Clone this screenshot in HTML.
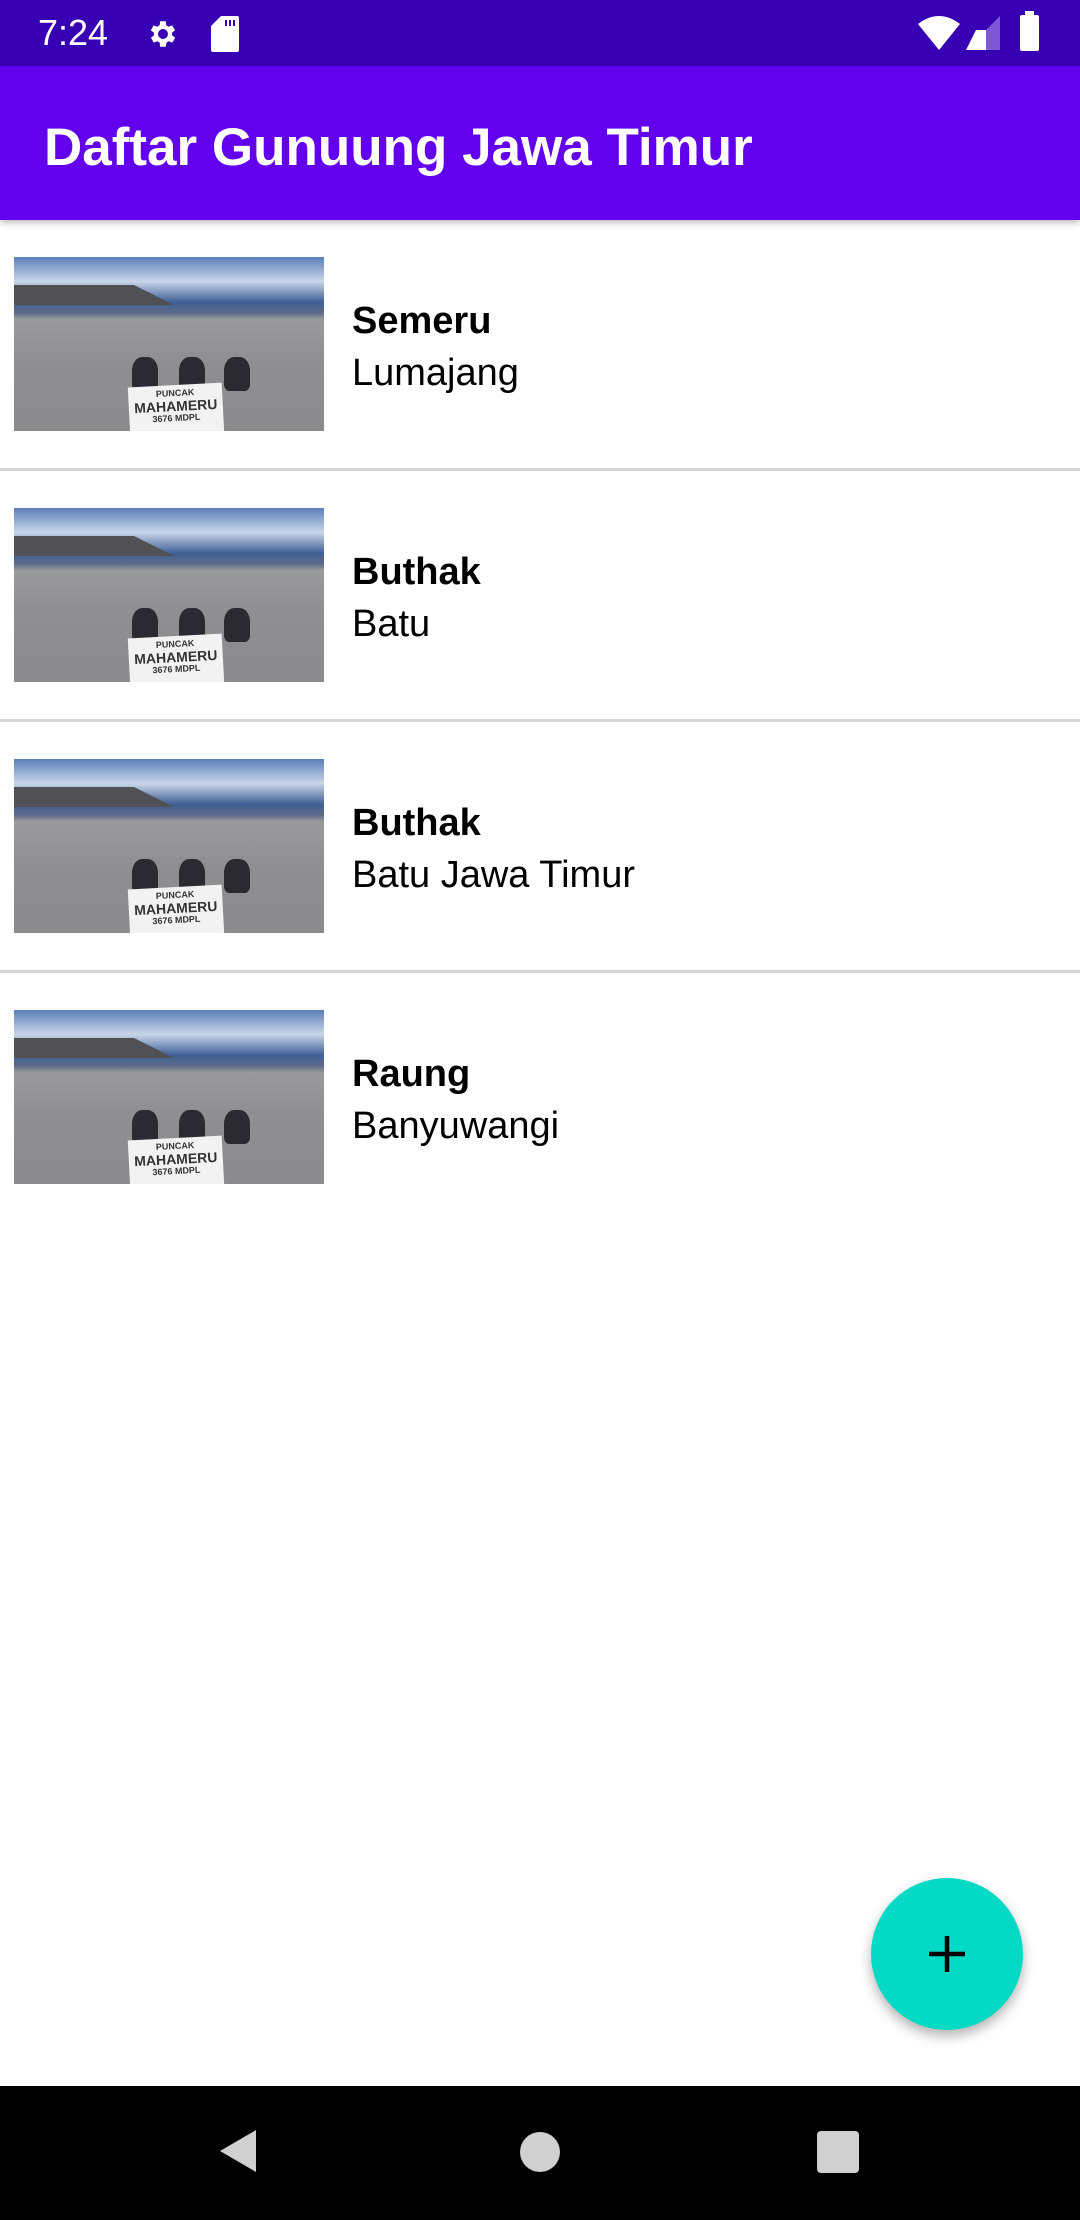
<!DOCTYPE html>
<html><head><meta charset="utf-8">
<style>
*{margin:0;padding:0;box-sizing:border-box}
body{width:1080px;height:2220px;position:relative;background:#fff;font-family:"Liberation Sans",Roboto,sans-serif;overflow:hidden}
.status{position:absolute;left:0;top:0;width:1080px;height:66px;background:#3700B3;color:#fff}
.appbar{position:absolute;left:0;top:66px;width:1080px;height:154px;background:#6200EE;box-shadow:0 3px 6px rgba(0,0,0,.25);z-index:2}
.title{position:absolute;left:44px;top:55px;font-size:53px;font-weight:bold;color:#fff;line-height:1}
.row{position:absolute;left:0;width:1080px;height:251px;border-bottom:3px solid #d6d6d6}
.img{position:absolute;left:14px;top:37px;width:310px;height:174px;overflow:hidden;background:linear-gradient(180deg,#5b7fb8 0%,#c9d6ea 14%,#3f5f95 26%,#5c6a8a 32%,#9a9a9c 36%,#8f8f92 60%,#8b8b8d 100%)}
.ridge{position:absolute;left:0;top:28px;width:160px;height:0;border-bottom:20px solid #505055;border-right:40px solid transparent}
.t1{position:absolute;left:352px;top:80px;font-size:38px;font-weight:bold;color:#000}
.t2{position:absolute;left:352px;top:132px;font-size:38px;color:#000}
.sign{position:absolute;left:115px;top:128px;width:94px;height:50px;background:#f2f2f2;transform:rotate(-3deg);font-size:9px;text-align:center;color:#333;font-weight:bold;line-height:1.1;padding-top:4px}
.rock{position:absolute;top:100px;width:26px;height:34px;background:#2a2a30;border-radius:40% 40% 20% 20%}
.nav{position:absolute;left:0;top:2086px;width:1080px;height:134px;background:#000}
.fab{position:absolute;left:871px;top:1878px;width:152px;height:152px;border-radius:50%;background:#03DAC5;box-shadow:0 6px 12px rgba(0,0,0,.3)}
</style></head><body>
<div class="status">
<div style="position:absolute;left:38px;top:12px;font-size:36px;color:#fff">7:24</div>
<svg style="position:absolute;left:146px;top:16px" width="34" height="36" viewBox="0 0 24 24"><path fill="#fff" d="M19.4 13a7.5 7.5 0 0 0 0-2l2.1-1.6-2-3.5-2.5 1a7 7 0 0 0-1.7-1L15 3h-4l-.4 2.9a7 7 0 0 0-1.7 1l-2.5-1-2 3.5L6.6 11a7.5 7.5 0 0 0 0 2l-2.1 1.6 2 3.5 2.5-1a7 7 0 0 0 1.7 1L11 21h4l.4-2.9a7 7 0 0 0 1.7-1l2.5 1 2-3.5zM13 15.5a3.5 3.5 0 1 1 0-7 3.5 3.5 0 0 1 0 7z" transform="translate(-1 0)"/></svg>
<svg style="position:absolute;left:211px;top:16px" width="28" height="36" viewBox="0 0 14 18"><path fill="#fff" d="M5 0h8a1 1 0 0 1 1 1v16a1 1 0 0 1-1 1H1a1 1 0 0 1-1-1V5z"/><rect x="7" y="2" width="1" height="3" fill="#3700B3"/><rect x="9" y="2" width="1" height="3" fill="#3700B3"/><rect x="11" y="2" width="1" height="3" fill="#3700B3"/></svg>
<svg style="position:absolute;left:916px;top:16px" width="46" height="34" viewBox="0 0 46 34"><path fill="#fff" d="M23 34L2 8Q23-8 44 8z"/></svg>
<svg style="position:absolute;left:966px;top:16px" width="34" height="34" viewBox="0 0 34 34"><path fill="#7e57d6" d="M34 0V34H0z"/><path fill="#fff" d="M20 14V34H0L10 14z"/></svg>
<div style="position:absolute;left:1020px;top:15px;width:19px;height:36px;background:#fff;border-radius:2px"></div>
<div style="position:absolute;left:1025px;top:11px;width:9px;height:5px;background:#fff"></div>
</div>
<div class="appbar"><div class="title">Daftar Gunuung Jawa Timur</div></div>

<div class="row" style="top:220px"><div class="img"><div class="ridge"></div><div class="rock" style="left:118px"></div><div class="rock" style="left:165px"></div><div class="rock" style="left:210px"></div><div class="sign">PUNCAK<br><span style="font-size:14px">MAHAMERU</span><br>3676 MDPL</div></div><div class="t1">Semeru</div><div class="t2">Lumajang</div></div>
<div class="row" style="top:471px"><div class="img"><div class="ridge"></div><div class="rock" style="left:118px"></div><div class="rock" style="left:165px"></div><div class="rock" style="left:210px"></div><div class="sign">PUNCAK<br><span style="font-size:14px">MAHAMERU</span><br>3676 MDPL</div></div><div class="t1">Buthak</div><div class="t2">Batu</div></div>
<div class="row" style="top:722px"><div class="img"><div class="ridge"></div><div class="rock" style="left:118px"></div><div class="rock" style="left:165px"></div><div class="rock" style="left:210px"></div><div class="sign">PUNCAK<br><span style="font-size:14px">MAHAMERU</span><br>3676 MDPL</div></div><div class="t1">Buthak</div><div class="t2">Batu Jawa Timur</div></div>
<div class="row" style="top:973px;border-bottom:none"><div class="img"><div class="ridge"></div><div class="rock" style="left:118px"></div><div class="rock" style="left:165px"></div><div class="rock" style="left:210px"></div><div class="sign">PUNCAK<br><span style="font-size:14px">MAHAMERU</span><br>3676 MDPL</div></div><div class="t1">Raung</div><div class="t2">Banyuwangi</div></div>

<div class="fab"><svg style="position:absolute;left:57px;top:57px" width="38" height="38" viewBox="0 0 38 38"><path d="M19 1V37M1 19H37" stroke="#000" stroke-width="4.5"/></svg></div>

<div class="nav">
<svg style="position:absolute;left:218px;top:42px" width="40" height="46" viewBox="0 0 40 46"><path d="M38 2V44L2 23z" fill="#d0d0d0"/></svg>
<div style="position:absolute;left:520px;top:46px;width:40px;height:40px;border-radius:50%;background:#d0d0d0"></div>
<div style="position:absolute;left:817px;top:45px;width:42px;height:42px;border-radius:4px;background:#d0d0d0"></div>
</div>
</body></html>
